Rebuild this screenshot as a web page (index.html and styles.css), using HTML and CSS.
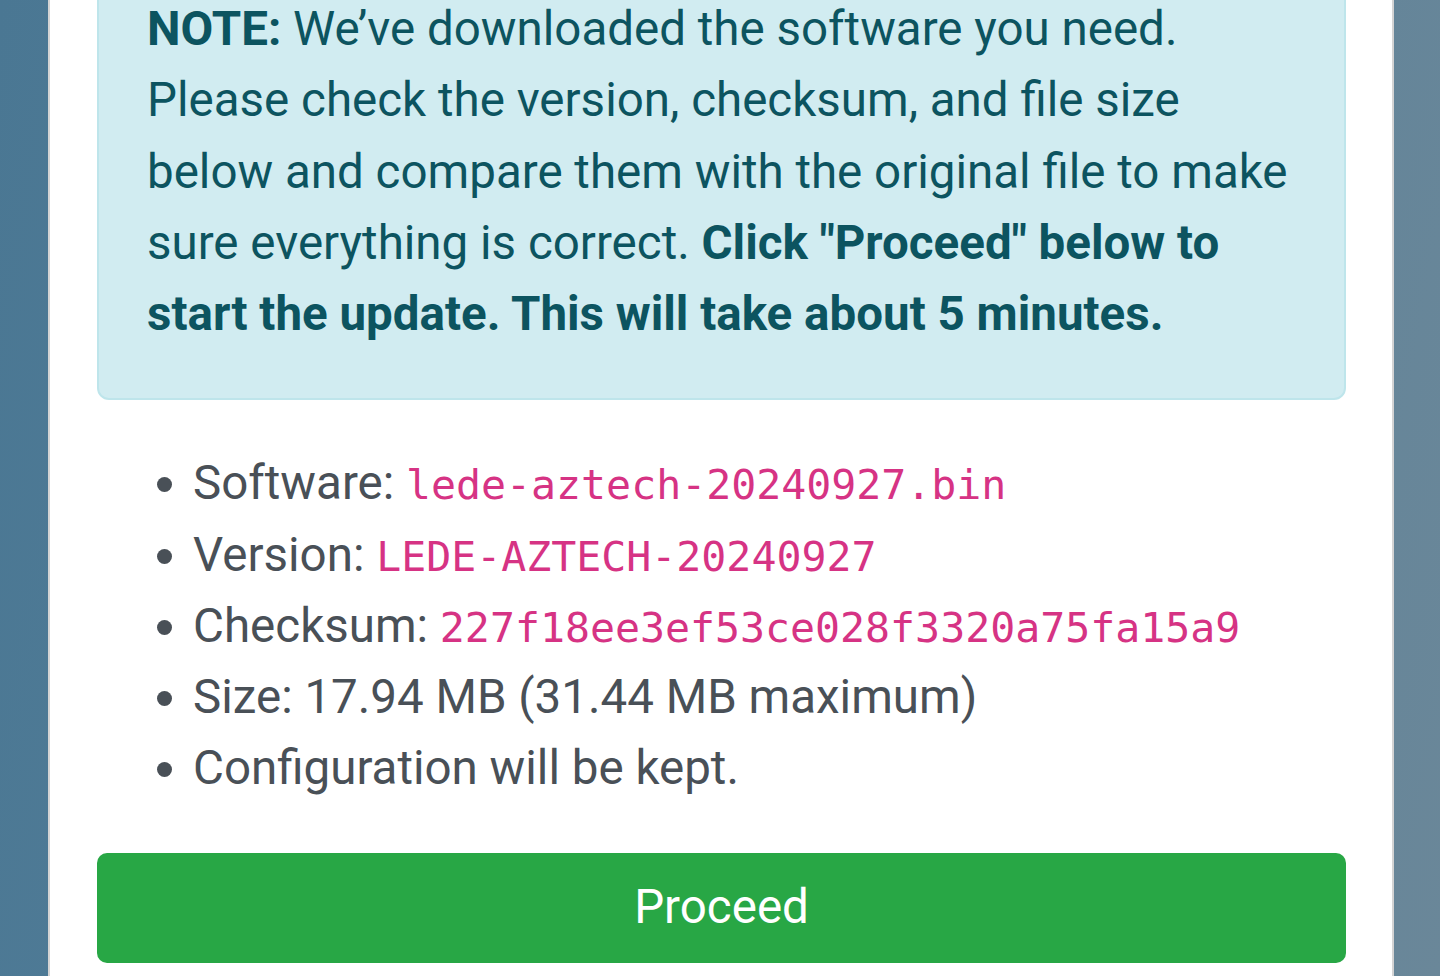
FILE: index.html
```html
<!DOCTYPE html>
<html lang="en">
<head>
<meta charset="utf-8">
<title>Firmware update</title>
<link rel="stylesheet" href="styles.css">
</head>
<body>
<main class="card">
  <div class="alert">
    <strong>NOTE:</strong> We’ve downloaded the software you need. Please check the version, checksum, and file size below and compare them with the original file to make sure everything is correct. <strong>Click "Proceed" below to start the update. This will take about 5 minutes.</strong>
  </div>
  <ul class="info">
    <li>Software: <code>lede-aztech-20240927.bin</code></li>
    <li>Version: <code>LEDE-AZTECH-20240927</code></li>
    <li>Checksum: <code>227f18ee3ef53ce028f3320a75fa15a9</code></li>
    <li>Size: 17.94 MB (31.44 MB maximum)</li>
    <li>Configuration will be kept.</li>
  </ul>
  <button class="btn-proceed" type="button">Proceed</button>
</main>
</body>
</html>
```

FILE: styles.css
```css
html, body {
  margin: 0;
  padding: 0;
  height: 100%;
  overflow: hidden;
}

body {
  background: linear-gradient(100deg, #4a7793 0%, #56809a 45%, #6a8799 100%);
  font-family: Roboto, "Liberation Sans", sans-serif;
  font-size: 47.5px;
  line-height: 1.5;
  color: #495057;
  padding: 0 46px 0 48px;
  box-sizing: border-box;
}

.card {
  background: #fff;
  border-left: 2px solid #d4d4d4;
  border-right: 2px solid #d4d4d4;
  padding: 0 46px 40px 47px;
  min-height: 100%;
  box-sizing: border-box;
}

.alert {
  margin-top: -58px;
  margin-bottom: 48px;
  padding: 50px 48px 48px;
  background: #d1ecf1;
  border: 2px solid #bee5eb;
  border-radius: 12px;
  color: #0c5460;
}

.alert strong {
  font-weight: 700;
}

.info {
  margin: 0 0 48px;
  padding-left: 96px;
}

code {
  font-family: "DejaVu Sans Mono", "Liberation Mono", monospace;
  font-size: 87.5%;
  color: #d63384;
}

.btn-proceed {
  display: block;
  width: 100%;
  height: 110px;
  border: 0;
  border-radius: 10px;
  background: #28a745;
  color: #fff;
  font-family: Roboto, "Liberation Sans", sans-serif;
  font-size: 47.5px;
  line-height: 1.5;
  padding: 0;
  cursor: pointer;
}
```
